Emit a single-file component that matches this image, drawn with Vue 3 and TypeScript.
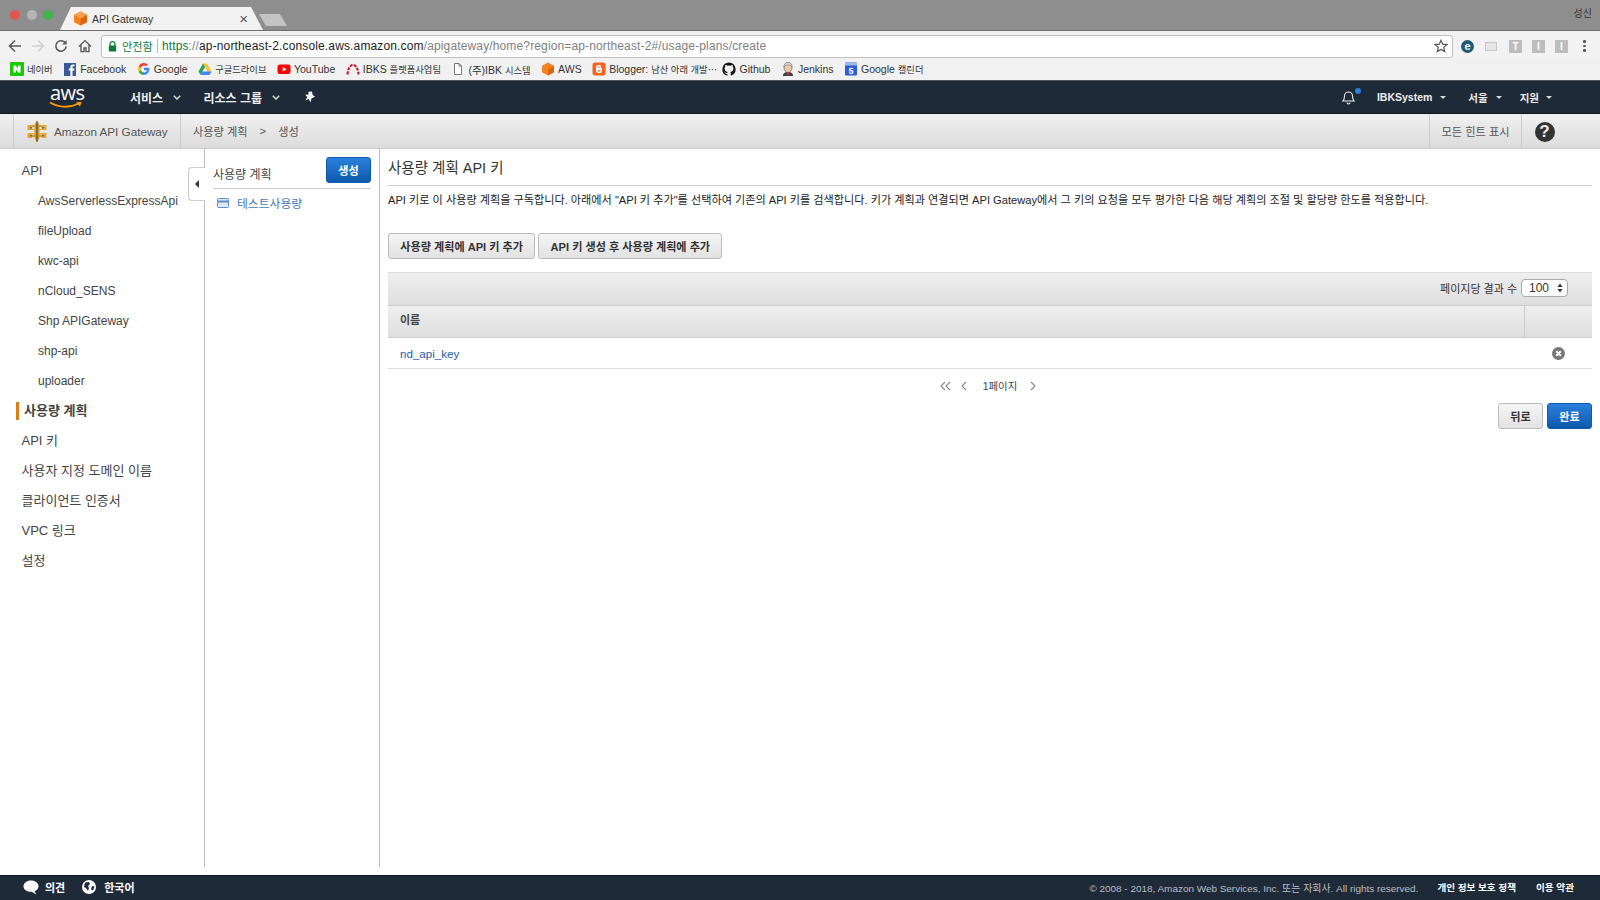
<script setup lang="ts">
const bookmarks = [
  { icon: 'naver', pre: '', ko: '네이버', cut: false },
  { icon: 'fb', pre: 'Facebook', ko: '', cut: false },
  { icon: 'google', pre: 'Google', ko: '', cut: false },
  { icon: 'drive', pre: '', ko: '구글드라이브', cut: false },
  { icon: 'yt', pre: 'YouTube', ko: '', cut: false },
  { icon: 'ibks', pre: 'IBKS ', ko: '플랫폼사업팀', cut: false },
  { icon: 'doc', pre: '(주)IBK ', ko: '시스템', cut: false },
  { icon: 'aws', pre: 'AWS', ko: '', cut: false },
  { icon: 'blogger', pre: 'Blogger: ', ko: '남산 아래 개발⋯', cut: true },
  { icon: 'github', pre: 'Github', ko: '', cut: false },
  { icon: 'jenkins', pre: 'Jenkins', ko: '', cut: false },
  { icon: 'cal', pre: 'Google ', ko: '캘린더', cut: false },
]
const apis = ['AwsServerlessExpressApi', 'fileUpload', 'kwc-api', 'nCloud_SENS', 'Shp APIGateway', 'shp-api', 'uploader']
const sections = ['API 키', '사용자 지정 도메인 이름', '클라이언트 인증서', 'VPC 링크', '설정']
</script>

<template>
  <div class="page">
    <div class="tabstrip">
      <div class="lights"><i class="red"></i><i class="grey"></i><i class="green"></i></div>
      <div class="tab">
        <svg class="cube" viewBox="0 0 14 14"><path d="M7 0.5 13 3.5 13 10.5 7 13.5 1 10.5 1 3.5Z" fill="#f58220"/><path d="M7 7 13 3.5 13 10.5 7 13.5Z" fill="#d9650f"/><path d="M7 0.5 13 3.5 7 7 1 3.5Z" fill="#f9a050"/></svg>
        <span class="tabtitle">API Gateway</span>
        <span class="tabclose">×</span>
      </div>
      <div class="newtab"></div>
      <span class="profile">성신</span>
    </div>

    <div class="toolbar">
      <div class="navbtns">
        <svg width="14" height="14" viewBox="0 0 14 14"><path d="M13 7H2M7 1.5 1.5 7 7 12.5" fill="none" stroke="#5a5a5a" stroke-width="1.6"/></svg>
        <svg width="14" height="14" viewBox="0 0 14 14"><path d="M1 7h11M7 1.5 12.5 7 7 12.5" fill="none" stroke="#cfcfcf" stroke-width="1.6"/></svg>
        <svg width="14" height="14" viewBox="0 0 14 14"><path d="M11.6 4.5A5.2 5.2 0 1 0 12.2 7.4" fill="none" stroke="#5a5a5a" stroke-width="1.6"/><path d="M12.6 1v4.4H8.2Z" fill="#5a5a5a"/></svg>
        <svg class="home" width="14" height="14" viewBox="0 0 14 14"><path d="M1 7.4 7 1.6l6 5.8M3 6v6.6h3V9h2v3.6h3V6" fill="none" stroke="#5a5a5a" stroke-width="1.4"/></svg>
      </div>
      <div class="omnibox">
        <svg class="lock" width="9" height="11" viewBox="0 0 9 11"><path d="M2 5V3.2a2.5 2.5 0 0 1 5 0V5" fill="none" stroke="#0b7a3b" stroke-width="1.2"/><rect x="0.8" y="4.6" width="7.4" height="6" rx="0.8" fill="#0b7a3b"/></svg>
        <span class="secure">안전함</span>
        <span class="omnisep"></span>
        <span class="url"><span class="https">https</span><span class="dim">://</span><span class="host">ap-northeast-2.console.aws.amazon.com</span><span class="dim">/apigateway/home?region=ap-northeast-2#/usage-plans/create</span></span>
        <svg class="star" width="14" height="14" viewBox="0 0 14 14"><path d="M7 1.3 8.7 5.2l4.2.4-3.2 2.8 1 4.2L7 10.4l-3.7 2.2 1-4.2L1.100 5.600l4.200-.4Z" fill="none" stroke="#555" stroke-width="1.200"/></svg>
      </div>
      <div class="exts">
        <span class="ext-e">e</span>
        <span class="ext-mon"></span>
        <span class="ext-box">T</span>
        <span class="ext-box">I</span>
        <span class="ext-box">I</span>
        <span class="ext-dots"><i></i><i></i><i></i></span>
      </div>
    </div>

    <div class="bookmarks">
      <div v-for="b in bookmarks" :key="b.icon" class="bookmark" :class="{ cut: b.cut }">
        <svg class="bmicon" viewBox="0 0 14 14">
          <template v-if="b.icon === 'naver'"><rect width="14" height="14" rx="1" fill="#1ec800"/><path d="M3.500 3.500h2.400l2.200 3.200V3.500h2.400v7H8.100L5.900 7.300v3.200H3.500Z" fill="#fff"/></template>
          <template v-else-if="b.icon === 'fb'"><rect x="1" y="1" width="12" height="13" fill="#3b5998"/><path d="M9.500 14V8.500h1.700l.3-2H9.500V5.300c0-.6.200-1 1-1h1V2.500H10C8.300 2.500 7.400 3.500 7.400 5v1.500H5.800v2h1.600V14Z" fill="#fff"/></template>
          <template v-else-if="b.icon === 'google'"><path d="M12.300 5.800H7v2.400h3.100a3.200 3.200 0 0 1-3.100 2.200V13c2.200 0 5.600-1.600 5.300-7.200Z" fill="#4285f4"/><path d="M7 10.400A3.400 3.400 0 0 1 3.800 8.100L1.700 9.800A6 6 0 0 0 7 13Z" fill="#34a853"/><path d="M3.800 8.100a3.400 3.400 0 0 1 0-2.200L1.700 4.200a6 6 0 0 0 0 5.600Z" fill="#fbbc05"/><path d="M3.800 5.900A3.400 3.400 0 0 1 9.100 4.300l1.900-1.800A6 6 0 0 0 1.700 4.200Z" fill="#ea4335"/></template>
          <template v-else-if="b.icon === 'drive'"><path d="M5 1.500h4l4.500 8H9.500Z" fill="#fbc02d"/><path d="M5 1.500 .5 9.500l2 3.500L7 5Z" fill="#1fa463"/><path d="M2.500 13h9l2-3.500H4.500Z" fill="#4285f4"/></template>
          <template v-else-if="b.icon === 'yt'"><rect x="0.500" y="2.500" width="13" height="9.500" rx="2.500" fill="#f00"/><path d="M5.700 5v4.500L9.700 7.250Z" fill="#fff"/></template>
          <template v-else-if="b.icon === 'ibks'"><path d="M1.500 12.500C2 6 4.500 3 7 3s5 3 5.500 9.500" fill="none" stroke="#c8102e" stroke-width="2" stroke-dasharray="3 1.200"/></template>
          <template v-else-if="b.icon === 'doc'"><path d="M3.500 1.500h4.500L10.500 4v8.500h-7Z" fill="#fff" stroke="#777"/><path d="M8 1.500V4h2.500" fill="none" stroke="#777"/></template>
          <template v-else-if="b.icon === 'aws'"><path d="M7 .5 13 3.700v6.600L7 13.500 1 10.300V3.700Z" fill="#f58220"/><path d="M7 7 13 3.700v6.600L7 13.500Z" fill="#d9650f"/></template>
          <template v-else-if="b.icon === 'blogger'"><rect x="0.500" y="0.500" width="13" height="13" rx="2.500" fill="#f5631f"/><path d="M4 4.800Q4 3 5.800 3h1.500Q9 3 9 4.800V6l1 .6V9.200Q10 11 8 11H5.800Q4 11 4 9.200Z" fill="#fff"/><path d="M5.500 5h2M5.500 8.800h3" stroke="#f5631f" stroke-width="1.200"/></template>
          <template v-else-if="b.icon === 'github'"><path d="M7 .4a6.800 6.800 0 0 0-2.100 13.200c.3.100.5-.1.500-.3V12c-1.900.4-2.300-.9-2.300-.9-.3-.8-.8-1-.8-1-.6-.4 0-.4 0-.4.700.1 1 .7 1 .7.600 1 1.600.7 2 .5.100-.4.200-.7.400-.9-1.500-.2-3.100-.8-3.100-3.400 0-.7.300-1.300.7-1.800-.1-.2-.3-.9.100-1.800 0 0 .6-.2 1.900.7a6.500 6.500 0 0 1 3.400 0c1.300-.9 1.900-.7 1.900-.7.400.9.200 1.600.1 1.800.4.500.7 1.100.7 1.800 0 2.600-1.600 3.200-3.100 3.400.2.200.5.600.5 1.300v1.900c0 .2.100.4.500.3A6.800 6.800 0 0 0 7 .4Z" fill="#181717"/></template>
          <template v-else-if="b.icon === 'jenkins'"><path d="M2 14c0-3 2-4 5-4s5 1 5 4Z" fill="#3d3d4d"/><ellipse cx="7" cy="5.500" rx="4" ry="5" fill="#eec9a8" stroke="#444" stroke-width=".6"/><path d="M3 5C3 1.500 5 .5 7 .5s4 1 4 4.500L9 3H5Z" fill="#ddd" stroke="#666" stroke-width=".5"/><rect x="6" y="10" width="2" height="3" fill="#c33"/></template>
          <template v-else><rect x="1" y="0.500" width="12" height="13" rx="1" fill="#2a5fd8"/><rect x="1" y="0.500" width="12" height="3" fill="#9fb7ea"/><text x="7" y="12" text-anchor="middle" font-size="9" font-weight="700" fill="#fff" font-family="Liberation Sans, sans-serif">5</text></template>
        </svg>
        <span class="bmlabel">{{ b.pre }}<span class="ko">{{ b.ko }}</span></span>
      </div>
    </div>

    <div class="awsnav">
      <div class="awslogo">
        <span class="awsword">aws</span>
        <svg class="smile" width="34" height="8" viewBox="0 0 34 8"><path d="M1 1.500Q15 9.500 30 2.500" fill="none" stroke="#f90" stroke-width="1.800"/><path d="M27 1.200 32.500 .8 31 5.500Z" fill="#f90"/></svg>
      </div>
      <div class="navleft">
        <span class="menu first">서비스 <svg class="chev" width="8" height="5" viewBox="0 0 8 5"><path d="M.8.800 4 4 7.200.800" fill="none" stroke="#d5dbdb" stroke-width="1.500"/></svg></span>
        <span class="menu">리소스 그룹 <svg class="chev" width="8" height="5" viewBox="0 0 8 5"><path d="M.8.800 4 4 7.200.800" fill="none" stroke="#d5dbdb" stroke-width="1.500"/></svg></span>
        <svg class="pin" width="12" height="12" viewBox="0 0 12 12"><path d="M4.500.8 8 .6l.6 3.200 2.400 2L7.500 7.500 6.500 11.500 4.800 8 1.500 9.500 3.200 6 1.200 3.800 4.500 3.500Z" fill="#f2f2f2"/></svg>
      </div>
      <div class="navright">
        <span class="bell">
          <svg width="15" height="16" viewBox="0 0 15 16"><path d="M2 12c1.200-1.200 1.500-2.300 1.500-5a4 4 0 0 1 8 0c0 2.700.300 3.800 1.500 5ZM6 13.500a1.500 1.500 0 0 0 3 0" fill="none" stroke="#eaeded" stroke-width="1.100"/></svg>
          <i class="dot"></i>
        </span>
        <span class="rmenu acct">IBKSystem <i class="caret"></i></span>
        <span class="rmenu region">서울 <i class="caret"></i></span>
        <span class="rmenu support">지원 <i class="caret"></i></span>
      </div>
    </div>

    <div class="subnav">
      <div class="brand">
        <svg width="20" height="23" viewBox="0 0 20 23">
          <path d="M7.500 5 10 .5 12.500 5V18L10 22.500 7.500 18Z" fill="#c99a35"/>
          <path d="M5 5h10v2H5ZM5 15h10v2H5Z" fill="#c99a35"/>
          <path d="M.5 5H5.500V9H14.500V5H19.500V10H.5ZM.5 13H19.500V18H14.500V14.500H5.500V18H.5Z" fill="#d9a93f"/>
          <path d="M9 1.500h2V21.500H9Z" fill="#8a6a24"/>
          <path d="M3 7h2v1.500H3ZM15 7h2v1.500H15ZM3 15h2v1.500H3ZM15 15h2v1.500H15Z" fill="#8a6a24"/>
        </svg>
        <span>Amazon API Gateway</span>
      </div>
      <div class="crumbs"><span>사용량 계획</span><span class="gt">&gt;</span><span>생성</span></div>
      <div class="hints">모든 힌트 표시</div>
      <div class="help"><span>?</span></div>
    </div>

    <div class="main">
      <aside class="leftnav">
        <a class="top">API</a>
        <a v-for="a in apis" :key="a" class="sub">{{ a }}</a>
        <a class="top active">사용량 계획</a>
        <a v-for="s in sections" :key="s" class="top">{{ s }}</a>
      </aside>
      <section class="plans">
        <div class="handle"><i></i></div>
        <div class="planshead">
          <span>사용량 계획</span>
          <button class="btn primary small">생성</button>
        </div>
        <div class="planitem">
          <svg width="12" height="10" viewBox="0 0 12 10"><rect x=".5" y=".5" width="11" height="9" rx="1" fill="#dfe8f5" stroke="#5f8fd0"/><rect x="1" y="2.500" width="10" height="2" fill="#5f8fd0"/></svg>
          <span>테스트사용량</span>
        </div>
      </section>
      <section class="content">
        <h2>사용량 계획 API 키</h2>
        <p>API 키로 이 사용량 계획을 구독합니다. 아래에서 "API 키 추가"를 선택하여 기존의 API 키를 검색합니다. 키가 계획과 연결되면 API Gateway에서 그 키의 요청을 모두 평가한 다음 해당 계획의 조절 및 할당량 한도를 적용합니다.</p>
        <div class="actions">
          <button class="btn">사용량 계획에 API 키 추가</button>
          <button class="btn">API 키 생성 후 사용량 계획에 추가</button>
        </div>
        <div class="table">
          <div class="pagesize">
            <span>페이지당 결과 수</span>
            <span class="select">100<svg width="6" height="10" viewBox="0 0 6 10"><path d="M3 .5 5.500 4H.5ZM3 9.500.5 6h5Z" fill="#333"/></svg></span>
          </div>
          <div class="thead"><span class="thname">이름</span><span class="thx"></span></div>
          <div class="trow">
            <a>nd_api_key</a>
            <svg class="remove" width="13" height="13" viewBox="0 0 13 13"><circle cx="6.500" cy="6.500" r="6.500" fill="#777"/><path d="M4.200 4.200l4.600 4.600M8.800 4.200 4.200 8.800" stroke="#fff" stroke-width="2"/></svg>
          </div>
        </div>
        <div class="pager">
          <svg width="11" height="10" viewBox="0 0 11 10"><path d="M5 1 1 5l4 4M10 1 6 5l4 4" fill="none" stroke="#888" stroke-width="1.100"/></svg>
          <svg class="prev" width="6" height="10" viewBox="0 0 6 10"><path d="M5 1 1 5l4 4" fill="none" stroke="#888" stroke-width="1.100"/></svg>
          <span>1페이지</span>
          <svg class="next" width="6" height="10" viewBox="0 0 6 10"><path d="M1 1l4 4-4 4" fill="none" stroke="#888" stroke-width="1.100"/></svg>
        </div>
        <div class="finish">
          <button class="btn small">뒤로</button>
          <button class="btn primary small">완료</button>
        </div>
      </section>
    </div>

    <footer class="foot">
      <svg class="bubble" width="16" height="15" viewBox="0 0 16 15"><path d="M8 .5c4.200 0 7.500 2.500 7.500 5.700 0 2.200-1.500 4-3.800 5l1.500 3.300-4.500-2.700C3.500 11.800.5 9.400.5 6.200.5 3 3.800.5 8 .5Z" fill="#fff"/></svg>
      <span class="fb">의견</span>
      <svg class="globe" width="14" height="14" viewBox="0 0 14 14"><circle cx="7" cy="7" r="7" fill="#fff"/><path d="M3 2.500 7 2l1 2-2 2 1 2-1 3-2-3-2-1ZM10 6l2.500.5-1.500 4-2-1Z" fill="#1f2a38"/></svg>
      <span class="fb">한국어</span>
      <span class="copy">© 2008 - 2018, Amazon Web Services, Inc. 또는 자회사. All rights reserved.</span>
      <span class="fb flink">개인 정보 보호 정책</span>
      <span class="fb flink">이용 약관</span>
    </footer>
  </div>
</template>

<style>
html, body { margin: 0; padding: 0; background: #fff; }
</style>

<style scoped>
.page {
  width: 1600px; height: 900px; overflow: hidden; display: flex; flex-direction: column;
  font-family: "Liberation Sans", "Noto Sans CJK KR", sans-serif; color: #333; background: #fff;
}
.tabstrip { height: 30px; background: #8e8e8e; display: flex; align-items: flex-end; border-bottom: 1px solid #6f6f6f; flex: none; }
.lights { display: flex; gap: 6.500px; padding: 0 0 10px 10px; width: 50px; }
.lights i { width: 10px; height: 10px; border-radius: 50%; display: block; flex: none; }
.red { background: #e5544d; } .grey { background: #b5b5b5; } .green { background: #3fb54a; }
.tab {
  width: 203px; height: 23px; background: #f2f2f2; box-sizing: border-box;
  clip-path: polygon(0 100%, 11px 0, 191px 0, 203px 100%);
  display: flex; align-items: center; padding: 0 15px 0 13px; font-size: 10.500px; color: #333; gap: 4px;
}
.cube { width: 15px; height: 15px; }
.tabtitle { flex: 1; }
.tabclose { font-size: 15px; color: #555; line-height: 1; }
.newtab { width: 28px; height: 12px; margin: 0 0 4px -4px; background: #c4c4c4; clip-path: polygon(0 0, 21px 0, 28px 100%, 7px 100%); }
.profile { margin-left: auto; font-size: 10px; color: #333; padding: 0 8px 10px 0; }
.toolbar { height: 27px; box-sizing: border-box; padding-top: 3px; background: #f2f2f2; display: flex; align-items: center; flex: none; }
.navbtns { display: flex; gap: 9px; padding-left: 8px; width: 101px; box-sizing: border-box; }
.home { margin-left: 1px; }
.omnibox {
  width: 1352px; height: 23px; box-sizing: border-box; background: #fff; border: 1px solid #bfbfbf; border-radius: 3px;
  display: flex; align-items: center; padding-left: 6px; font-size: 12px;
}
.lock { margin-right: 5px; }
.secure { color: #0b7a3b; font-size: 11.200px; }
.omnisep { width: 1px; height: 14px; background: #bbb; margin: 0 4px; }
.url { flex: 1; letter-spacing: .14px; white-space: nowrap; }
.https { color: #0b7a3b; } .dim { color: #808080; } .host { color: #222; }
.star { margin-right: 4px; }
.exts { display: flex; align-items: center; padding-left: 8px; }
.ext-e { width: 13px; height: 13px; border-radius: 50%; background: #1e5b74; color: #fff; font-size: 11px; font-weight: 700; line-height: 12px; text-align: center; margin-right: 11px; }
.ext-mon { width: 10px; height: 7px; background: #e6e6e6; border: 1px solid #c8c8c8; margin-right: 12px; }
.ext-box { width: 13px; height: 13px; background: #bdbdbd; color: #fff; font-size: 10px; font-weight: 700; line-height: 13px; text-align: center; margin-right: 10px; }
.ext-dots { display: flex; flex-direction: column; gap: 2px; margin-left: 5px; }
.ext-dots i { width: 2.500px; height: 2.500px; background: #555; border-radius: 50%; display: block; }
.bookmarks { height: 22px; background: #f1f1f1; border-bottom: 1px solid #555; display: flex; align-items: center; padding-left: 10px; gap: 10.500px; font-size: 10.500px; color: #333; flex: none; box-sizing: content-box; }
.bookmark { display: flex; align-items: center; gap: 3px; white-space: nowrap; }
.bookmark.cut { margin-right: -5px; }
.ko { font-size: 9.300px; }
.bmicon { width: 14px; height: 14px; flex: none; }
.awsnav { height: 32px; background: #1f2a38; display: flex; align-items: center; color: #eee; flex: none; border-bottom: 1px solid #10161e; }
.awslogo { width: 130px; position: relative; height: 32px; flex: none; }
.awsword { position: absolute; left: 50px; top: 1px; font-family: "Open Sans", sans-serif; font-size: 20px; color: #fff; line-height: 22px; letter-spacing: -.5px; }
.smile { position: absolute; left: 49px; top: 20px; }
.navleft { display: flex; align-items: center; flex: 1; font-size: 12px; font-weight: 700; }
.menu { display: flex; align-items: center; gap: 7px; margin-right: 22px; white-space: pre; }
.pin { margin-left: 2px; }
.navright { display: flex; align-items: center; font-size: 10.500px; font-weight: 700; padding-right: 48px; }
.bell { position: relative; display: flex; margin-right: 21px; }
.dot { position: absolute; right: -5px; top: -1px; width: 6px; height: 6px; background: #2a80d8; border-radius: 50%; }
.rmenu { display: flex; align-items: center; gap: 8px; white-space: nowrap; }
.support { gap: 7px; }
.acct { margin-right: 22px; } .region { margin-right: 18px; }
.caret { width: 0; height: 0; border: 3px solid transparent; border-top: 3px solid #d5dbdb; border-bottom: 0; display: block; }
.subnav { height: 35px; box-sizing: border-box; background: linear-gradient(#f0f0f0, #dcdcdc); border-bottom: 1px solid #ccc; display: flex; align-items: stretch; flex: none; font-size: 11.200px; color: #555; }
.brand { margin-left: 13px; width: 168px; box-sizing: border-box; border-left: 1px solid #ccc; border-right: 1px solid #ccc; padding-left: 13px; display: flex; align-items: center; gap: 7px; font-size: 11.700px; white-space: nowrap; }
.crumbs { flex: 1; display: flex; align-items: center; padding-left: 12px; }
.gt { margin: 0 12px; }
.hints { width: 93px; border-left: 1px solid #ccc; border-right: 1px solid #ccc; display: flex; align-items: center; justify-content: center; box-sizing: border-box; }
.help { width: 78px; display: flex; align-items: center; padding: 1px 0 0 12.500px; box-sizing: border-box; }
.help span { width: 20px; height: 20px; border-radius: 50%; background: #333; color: #eee; font-size: 17px; font-weight: 700; line-height: 20px; text-align: center; display: block; }
.main { flex: 1; display: flex; min-height: 0; margin-bottom: 8px; }
.leftnav { width: 204px; flex: none; border-right: 1px solid #bbb; display: flex; flex-direction: column; padding-top: 7px; box-sizing: content-box; font-size: 13px; color: #444; }
.leftnav a { height: 30px; line-height: 30px; display: block; white-space: nowrap; }
.top { padding-left: 21.500px; }
.sub { padding-left: 38px; font-size: 12px; }
.active { font-weight: 700; position: relative; padding-left: 24px; }
.active::before { content: ""; position: absolute; left: 16px; top: 6px; width: 3px; height: 18px; background: #e07b1a; }
.plans { width: 175px; flex: none; border-right: 1px solid #bbb; position: relative; padding: 8px 8px 0; box-sizing: border-box; }
.handle { position: absolute; left: -17px; top: 18px; width: 16px; height: 32px; background: #fff; border: 1px solid #ccc; border-right: 0; border-radius: 4px 0 0 4px; display: flex; align-items: center; justify-content: center; }
.handle i { width: 0; height: 0; border: 4px solid transparent; border-right: 4px solid #333; border-left: 0; display: block; }
.planshead { display: flex; align-items: flex-start; justify-content: space-between; height: 31px; border-bottom: 1px solid #ccc; font-size: 12px; line-height: 36px; color: #444; box-sizing: content-box; }
.planitem { display: flex; align-items: center; gap: 8px; padding: 5px 0 0 4px; font-size: 11.800px; color: #4a78b8; }
.content { flex: 1; padding: 8px 8px 0 8px; min-width: 0; }
h2 { margin: 0; height: 28px; font-size: 14.500px; font-weight: 400; color: #333; line-height: 22px; border-bottom: 1px solid #ccc; }
p { margin: 6px 0 0; font-size: 11.130px; line-height: 16px; color: #222; white-space: nowrap; }
.actions { display: flex; gap: 3px; margin-top: 25px; }
.btn {
  height: 26px; box-sizing: border-box; padding: 0 11.300px; border: 1px solid #bbb; border-radius: 3px;
  background: linear-gradient(#f5f5f5, #e2e2e2); font: 700 11.100px "Liberation Sans", "Noto Sans CJK KR", sans-serif; color: #333; white-space: nowrap;
}
.btn.small { width: 45px; padding: 0; }
.btn.primary { background: linear-gradient(#2a80dc, #0d5aad); border-color: #0d5aad; color: #fff; }
.table { margin-top: 13px; }
.pagesize { height: 34px; box-sizing: border-box; border-top: 1px solid #ddd; border-bottom: 1px solid #ccc; padding-bottom: 2px; background: linear-gradient(#efefef, #dedede); display: flex; align-items: center; justify-content: flex-end; padding-right: 24px; gap: 4px; font-size: 11px; color: #333; }
.select { width: 47px; height: 18px; box-sizing: border-box; border: 1px solid #aaa; border-radius: 4px; background: #fff; display: flex; align-items: center; justify-content: space-between; padding: 0 4px 0 7px; font-size: 12px; }
.thead { height: 32px; box-sizing: border-box; background: linear-gradient(#efefef, #dedede); border-bottom: 1px solid #ccc; display: flex; align-items: stretch; font-size: 11px; font-weight: 700; color: #444; }
.thname { flex: 1; padding-left: 12px; line-height: 28px; }
.thx { width: 67px; border-left: 1px solid #ccc; }
.trow { height: 31px; box-sizing: border-box; border-bottom: 1px solid #ddd; display: flex; align-items: center; justify-content: space-between; padding: 0 27px 0 12px; font-size: 11.600px; color: #2a5db0; }
.remove { flex: none; }
.pager { display: flex; align-items: center; justify-content: center; height: 33px; font-size: 10.400px; color: #444; padding-right: 4px; }
.prev { margin: 0 16px 0 10px; }
.next { margin-left: 13px; }
.finish { display: flex; justify-content: flex-end; gap: 4px; margin-top: 1px; }
.foot { height: 25px; background: #1f2a38; border-top: 1px solid #10161e; padding-bottom: 2px; box-sizing: border-box; display: flex; align-items: center; flex: none; font-size: 11px; color: #d5dbdb; white-space: nowrap; }
.bubble { margin-left: 23px; margin-right: 6px; }
.fb { font-weight: 700; color: #fff; font-size: 11px; }
.globe { margin-left: 17px; margin-right: 8px; }
.copy { margin-left: auto; margin-right: 19px; font-size: 9.950px; color: #b9bfc4; }
.flink { font-size: 9.600px; margin-right: 20px; }
.flink:last-child { margin-right: 26px; }
</style>
